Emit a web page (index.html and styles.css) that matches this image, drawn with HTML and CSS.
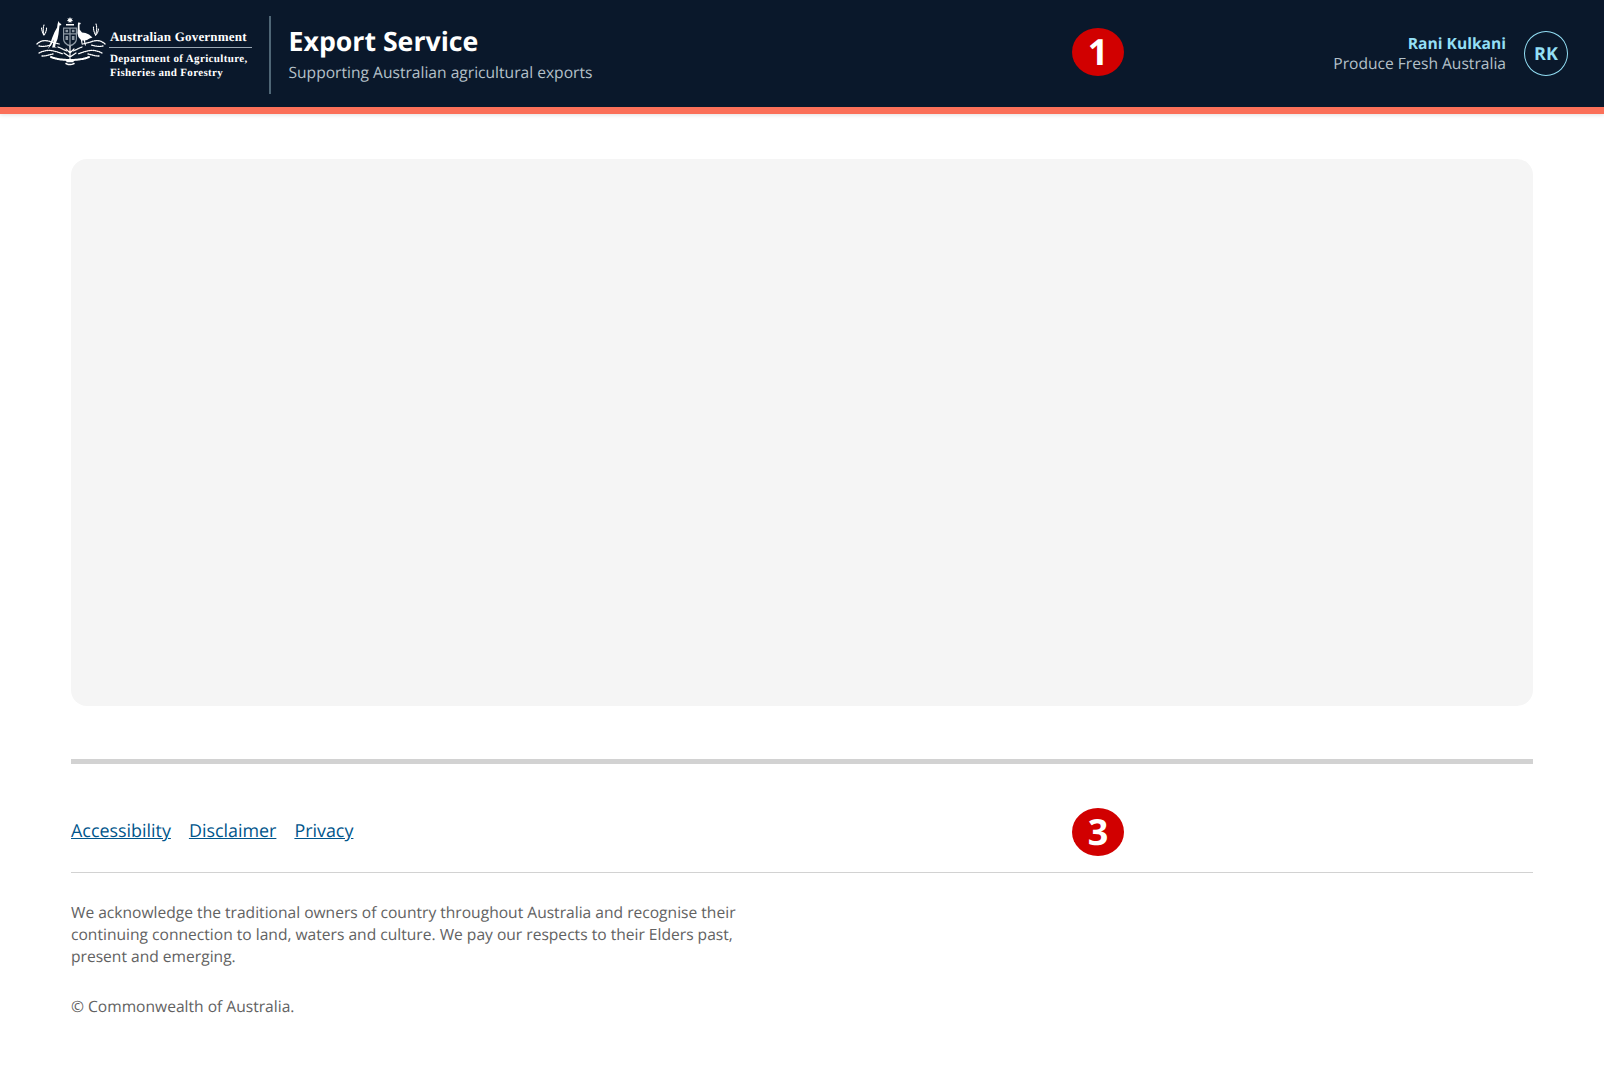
FILE: index.html
```html
<!DOCTYPE html>
<html lang="en">
<head>
<meta charset="utf-8">
<title>Export Service</title>
<link rel="stylesheet" href="styles.css">
</head>
<body>
<header class="site-header">
  <div class="brand">
    <svg class="crest" viewBox="0 0 70 50" aria-hidden="true">
      <g fill="#fff">
        <path d="M34 1l.8 1.700 1.800-.5-.9 1.600 1.500 1.100-1.900.3 0 1.900-1.300-1.400-1.300 1.400 0-1.900-1.900-.3 1.500-1.100-.9-1.600 1.800.5z"/>
        <rect x="30" y="8" width="8" height="1.500"/>
        <path d="M22.500 5l1 2 1.300.7.700 1.300-2 .5-.4 3.500-.6 5-1 5-1.800 4.500-.6 3.300 2 .7h-5l1-4 .5-4-1.700 4.500-4 5 2.500-6 1.700-5 2.500-6 2.500-4.500.5-3.500z"/>
        <path d="M42 6.500l2.300.3.500 1.200-1.300.5.100 5 2.400 3 3.500.5 3.500 1.500 3.500 3-3 1-2.500 1.500-2 .5 1 5-1 0-1.300-5-1.500 0 .5 4-1 0-.8-4.500-2.500-3-1-4 .4-5.500z"/>
      </g>
      <g fill="#8d98a3">
        <path fill-rule="evenodd" d="M27 11.500h14v11.500c0 3.500-3 6.500-7 7.500-4-1-7-4-7-7.500zM28.200 12.700v4.600h5.200v-4.600zM34.600 12.700v4.600h5.200v-4.600zM28.200 18.500v4.500c0 2.500 2 4.500 5.200 5.800v-10.300zM34.600 18.500v10.300c3.200-1.300 5.200-3.300 5.200-5.800v-4.500z"/>
        <path d="M29.500 13.700h2.600v2.600h-2.600zM35.900 13.700h2.600v2.600h-2.600zM29.500 20h2.600v4h-2.600zM35.900 20h2.600v4h-2.600z"/>
      </g>
      <g fill="none" stroke="#fff" stroke-linecap="round">
        <g stroke-width="1.100" stroke-dasharray="1 1">
          <path d="M8 9c-1 3-1 6 0 10"/>
          <path d="M5.500 12c.5 3 1 5 2.500 7"/>
          <path d="M10.500 12c0 3-1 5-2.500 7"/>
          <path d="M60 8c1 3 1 7-.5 11"/>
          <path d="M57.500 11c0 3 .5 5 2 8"/>
          <path d="M62.500 13c-.5 3-1.500 5-3 6"/>
        </g>
        <g stroke-width="1.300" stroke-dasharray="1 1.100">
          <path d="M1 28c3-3 7-4 11-3s7 2 11 3"/>
          <path d="M3 30c4 1 8 0 12-1"/>
          <path d="M69 28c-3-3-7-4-11-3s-7 2-11 3"/>
          <path d="M67 30c-4 1-8 0-12-1"/>
          <path d="M3 37c4-2 8-3 12-2.500s8 2 12 3.500"/>
          <path d="M6 40c4 0 7-1 11-2"/>
          <path d="M66 37c-4-2-8-3-12-2.500s-8 2-12 3.500"/>
          <path d="M63 40c-4 0-7-1-11-2"/>
          <path d="M22 31c3 1 6 3 9 4M46 31c-3 1-6 3-9 4"/>
        </g>
        <path stroke-width="2" stroke-dasharray="1.200 .9" d="M15 41c5 2 11 3 19 3s14-1 19-3"/>
        <path stroke-width="1.200" d="M34 30v13M30 33l4 4 4-4M28 37l6 4 6-4"/>
        <path stroke-width="1.500" stroke-dasharray="1.200 .6" d="M30 47.500c2 1.300 6 1.300 8 0M31 45.500h6"/>
      </g>
    </svg>
    <div class="agency">
      <div class="agency-gov">Australian Government</div>
      <div class="agency-dept">Department of Agriculture,<br>Fisheries and Forestry</div>
    </div>
    <div class="brand-rule"></div>
    <div class="service">
      <div class="service-name">Export Service</div>
      <div class="service-tag">Supporting Australian agricultural exports</div>
    </div>
  </div>
  <div class="user">
    <div class="user-text">
      <div class="user-name">Rani Kulkani</div>
      <div class="user-org">Produce Fresh Australia</div>
    </div>
    <div class="avatar">RK</div>
  </div>
  <span class="marker marker-header">1</span>
</header>
<main class="content">
  <div class="placeholder"></div>
</main>
<footer class="site-footer">
  <nav class="footer-links">
    <a href="#">Accessibility</a>
    <a href="#">Disclaimer</a>
    <a href="#">Privacy</a>
    <span class="marker marker-footer">3</span>
  </nav>
  <div class="footer-text">
    <p>We acknowledge the traditional owners of country throughout Australia and recognise their continuing connection to land, waters and culture. We pay our respects to their Elders past, present and emerging.</p>
    <p>© Commonwealth of Australia.</p>
  </div>
</footer>
</body>
</html>
```

FILE: styles.css
```css
* { box-sizing: border-box; }
html, body { margin: 0; padding: 0; }
body {
  background: #fff;
  font-family: "Open Sans", sans-serif;
  color: #626262;
  height: 1073px;
  overflow: hidden;
  text-rendering: geometricPrecision;
  -webkit-font-smoothing: antialiased;
}
.site-header {
  position: relative;
  height: 114px;
  background: #0a182b;
  border-bottom: 7px solid #fb7059;
  box-shadow: 0 1px 4px rgba(0, 0, 0, 0.12);
  display: flex;
  align-items: flex-start;
  justify-content: space-between;
  padding: 16px 36px 0;
}
.brand { display: flex; align-items: flex-start; }
.crest { width: 70px; height: 50px; flex: none; }
.agency {
  font-family: "Liberation Serif", serif;
  font-weight: 700;
  color: #fff;
  margin-left: 3px;
  padding-top: 12px;
  width: 143px;
}
.agency-gov {
  font-size: 13px;
  line-height: 17px;
  letter-spacing: 0.2px;
  padding-left: 1px;
  padding-bottom: 2px;
  border-bottom: 1px solid #9aa7b3;
}
.agency-dept {
  font-size: 11px;
  line-height: 14px;
  letter-spacing: 0.35px;
  padding: 4px 0 0 1px;
  white-space: nowrap;
}
.brand-rule {
  width: 2px;
  height: 78px;
  background: #4f6676;
  margin-left: 17px;
}
.service { margin-left: 17.500px; padding-top: 8px; }
.service-name {
  font-size: 26.7px;
  line-height: 34px;
  font-weight: 700;
  color: #fff;
}
.service-tag {
  font-size: 15.6px;
  line-height: 24px;
  color: #b4c0c9;
  margin-top: 2px;
}
.user { display: flex; align-items: flex-start; margin-top: 17px; }
.user-text { text-align: right; margin-right: 18px; }
.user-name {
  font-size: 15.6px;
  line-height: 20px;
  font-weight: 700;
  color: #93dff5;
}
.user-org {
  font-size: 15.6px;
  line-height: 21px;
  color: #b4c0c9;
}
.avatar {
  width: 44px;
  height: 45px;
  margin-top: -2px;
  border-radius: 50%;
  border: 1.5px solid #93dff5;
  color: #93dff5;
  font-size: 18px;
  font-weight: 700;
  display: flex;
  align-items: center;
  justify-content: center;
}
.marker {
  position: absolute;
  left: 1072px;
  width: 52px;
  height: 48px;
  border-radius: 50%;
  background: #d10000;
  color: #fff;
  font-size: 36px;
  font-weight: 700;
  display: flex;
  align-items: center;
  justify-content: center;
  line-height: 1;
}
.marker-header { top: 28px; }
.marker-footer { top: 808px; }
.content { padding: 45px 71px 0; }
.placeholder {
  height: 547px;
  background: #f5f5f5;
  border-radius: 16px;
}
.site-footer { margin: 53px 71px 0; border-top: 5px solid #d2d2d2; }
.footer-links {
  display: flex;
  gap: 18px;
  padding: 54px 0 27px;
  border-bottom: 1px solid #d2d2d2;
  font-size: 17.9px;
  line-height: 26px;
  height: 109px;
}
.footer-links a { color: #00558b; text-decoration: underline; }
.footer-text {
  font-size: 15.6px;
  line-height: 22px;
  color: #626262;
  padding-top: 28px;
  max-width: 680px;
}
.footer-text p { margin: 0 0 28px; }
```
